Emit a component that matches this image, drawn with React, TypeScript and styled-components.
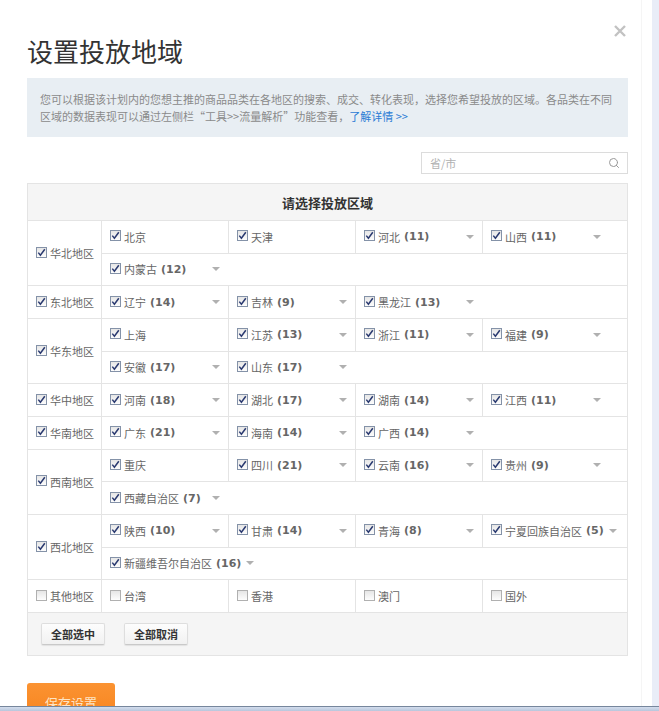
import React from 'react';
import styled, { createGlobalStyle } from 'styled-components';
import { Search } from 'lucide-react';

const CJK = `"Noto Sans CJK SC", "Noto Sans", sans-serif`;
const LINE = '#e4e4e4';

const GlobalStyle = createGlobalStyle`
  html, body {
    margin: 0;
    padding: 0;
    background: #fff;
  }
  body {
    font-family: ${CJK};
  }
`;

type Province = { name: string; count?: number; checked?: boolean };
type Region = { name: string; checked: boolean; rows: Province[][] };

const regions: Region[] = [
  {
    name: '华北地区',
    checked: true,
    rows: [
      [{ name: '北京' }, { name: '天津' }, { name: '河北', count: 11 }, { name: '山西', count: 11 }],
      [{ name: '内蒙古', count: 12 }],
    ],
  },
  {
    name: '东北地区',
    checked: true,
    rows: [[{ name: '辽宁', count: 14 }, { name: '吉林', count: 9 }, { name: '黑龙江', count: 13 }]],
  },
  {
    name: '华东地区',
    checked: true,
    rows: [
      [{ name: '上海' }, { name: '江苏', count: 13 }, { name: '浙江', count: 11 }, { name: '福建', count: 9 }],
      [{ name: '安徽', count: 17 }, { name: '山东', count: 17 }],
    ],
  },
  {
    name: '华中地区',
    checked: true,
    rows: [[{ name: '河南', count: 18 }, { name: '湖北', count: 17 }, { name: '湖南', count: 14 }, { name: '江西', count: 11 }]],
  },
  {
    name: '华南地区',
    checked: true,
    rows: [[{ name: '广东', count: 21 }, { name: '海南', count: 14 }, { name: '广西', count: 14 }]],
  },
  {
    name: '西南地区',
    checked: true,
    rows: [
      [{ name: '重庆' }, { name: '四川', count: 21 }, { name: '云南', count: 16 }, { name: '贵州', count: 9 }],
      [{ name: '西藏自治区', count: 7 }],
    ],
  },
  {
    name: '西北地区',
    checked: true,
    rows: [
      [{ name: '陕西', count: 10 }, { name: '甘肃', count: 14 }, { name: '青海', count: 8 }, { name: '宁夏回族自治区', count: 5 }],
      [{ name: '新疆维吾尔自治区', count: 16 }],
    ],
  },
  {
    name: '其他地区',
    checked: false,
    rows: [[
      { name: '台湾', checked: false },
      { name: '香港', checked: false },
      { name: '澳门', checked: false },
      { name: '国外', checked: false },
    ]],
  },
];

const Screen = styled.div`
  height: 711px;
  display: flex;
  flex-direction: column;
  overflow: hidden;
`;

const Workspace = styled.div`
  flex: 1;
  min-height: 0;
  display: flex;
  overflow: hidden;
`;

const Dialog = styled.div`
  position: relative;
  flex: 0 0 642px;
  box-sizing: border-box;
  padding: 36px 13px 0 27px;
  border-right: 1px solid #f5f5f5;
  background: #fff;
`;

const Gutter = styled.div`
  flex: 1;
  background: #fff;
`;

const SideStrip = styled.div`
  flex: 0 0 7px;
  background: #e9edf8;
`;

const Taskbar = styled.div`
  height: 4px;
  border-top: 1px solid #76869c;
  background: linear-gradient(#d3dded, #b8c7dc);
`;

const Close = styled.button`
  position: absolute;
  top: 25px;
  right: 15px;
  width: 12px;
  height: 12px;
  padding: 0;
  border: none;
  background: none;
  display: flex;
`;

const Title = styled.h1`
  margin: 0 0 12px;
  font: 400 26px/30px ${CJK};
  color: #333;
`;

const Notice = styled.p`
  margin: 0;
  padding: 13px;
  background: #e8eef3;
  color: #8a8a8a;
  font: 11px/16.5px ${CJK};
  white-space: nowrap;
`;

const MoreLink = styled.a`
  color: #2a7bd5;
  text-decoration: none;
`;

const SearchRow = styled.div`
  display: flex;
  justify-content: flex-end;
  margin-top: 15px;
`;

const SearchBox = styled.label`
  width: 207px;
  height: 22px;
  box-sizing: border-box;
  border: 1px solid #dcdcdc;
  display: flex;
  align-items: center;
  padding: 0 7px 0 8px;
  color: #999;
`;

const SearchInput = styled.input`
  flex: 1;
  min-width: 0;
  border: none;
  outline: none;
  padding: 0;
  background: transparent;
  font: 11px ${CJK};
  color: #666;
  &::placeholder {
    color: #b0b0b0;
  }
`;

const Table = styled.div`
  margin-top: 9px;
  border: 1px solid ${LINE};
`;

const TableHead = styled.div`
  height: 36px;
  display: flex;
  align-items: center;
  justify-content: center;
  background: #f5f5f5;
  border-bottom: 1px solid ${LINE};
  font: 700 13px ${CJK};
  color: #333;
`;

const RegionGroup = styled.div`
  display: flex;
  border-bottom: 1px solid ${LINE};
`;

const RegionCell = styled.div`
  flex: 0 0 74px;
  box-sizing: border-box;
  display: flex;
  align-items: center;
  padding-left: 8px;
  border-right: 1px solid ${LINE};
`;

const SubRows = styled.div`
  flex: 1;
  display: flex;
  flex-direction: column;
`;

const SubRow = styled.div`
  height: 31.67px;
  display: flex;
  border-bottom: 1px solid ${LINE};
  &:last-child {
    border-bottom: none;
  }
`;

const Item = styled.div`
  flex: 0 0 auto;
  min-width: 127px;
  box-sizing: border-box;
  display: flex;
  align-items: center;
  padding: 0 8px;
  border-right: 1px solid ${LINE};
  &:last-child {
    border-right-color: transparent;
  }
`;

const Box = styled.span<{ $on: boolean }>`
  flex: 0 0 auto;
  width: 11px;
  height: 11px;
  box-sizing: border-box;
  margin-right: 3px;
  margin-top: -2px;
  border: 1px solid ${(p) => (p.$on ? '#8492a8' : '#b0b0b0')};
  background: linear-gradient(#e6e6e6, #fdfdfd);
  display: flex;
  align-items: center;
  justify-content: center;
`;

const Name = styled.span`
  font: 11px ${CJK};
  color: #666;
  white-space: nowrap;
`;

const Count = styled.span`
  margin-left: 4px;
  margin-right: 5px;
  font: 700 11px "DejaVu Sans", Verdana, sans-serif;
  color: #666;
  white-space: nowrap;
`;

const Caret = styled.span`
  flex: 0 0 auto;
  margin-left: auto;
  width: 0;
  height: 0;
  border-left: 4px solid transparent;
  border-right: 4px solid transparent;
  border-top: 4px solid #b0b0b0;
`;

const ButtonBar = styled.div`
  height: 42px;
  box-sizing: border-box;
  display: flex;
  align-items: flex-start;
  gap: 19px;
  padding: 10px 0 0 13px;
  background: #f5f5f5;
`;

const BarButton = styled.button`
  height: 22px;
  padding: 0 9px;
  font: 700 11px ${CJK};
  color: #333;
  background: linear-gradient(#fdfdfd, #f1f1f1);
  border: 1px solid #dedede;
  border-bottom-color: #c9c9c9;
  border-radius: 2px;
  box-shadow: 0 1px 1px rgba(0, 0, 0, 0.08);
`;

const SaveButton = styled.button`
  margin-top: 27px;
  width: 88px;
  height: 40px;
  border: none;
  border-radius: 3px;
  background: linear-gradient(#fb9332, #f7821c);
  color: #fde4c4;
  font: 13px ${CJK};
`;

function Check({ on }: { on: boolean }) {
  return (
    <Box $on={on}>
      {on && (
        <svg width="9" height="9" viewBox="0 0 9 9">
          <path d="M1.3 4.6 L3.4 7.2 L7.8 1.2" fill="none" stroke="#2a3a70" strokeWidth="1.5" />
        </svg>
      )}
    </Box>
  );
}

function ProvinceItem({ p }: { p: Province }) {
  return (
    <Item>
      <Check on={p.checked !== false} />
      <Name>{p.name}</Name>
      {p.count !== undefined && (
        <>
          <Count>({p.count})</Count>
          <Caret />
        </>
      )}
    </Item>
  );
}

export default function App() {
  return (
    <Screen>
      <GlobalStyle />
      <Workspace>
        <Dialog>
          <Close aria-label="关闭">
            <svg width="12" height="12" viewBox="0 0 12 12">
              <path d="M1 1 L11 11 M11 1 L1 11" stroke="#c2c2c2" strokeWidth="2.4" />
            </svg>
          </Close>
          <Title>设置投放地域</Title>
          <Notice>
            您可以根据该计划内的您想主推的商品品类在各地区的搜索、成交、转化表现，选择您希望投放的区域。各品类在不同
            <br />
            区域的数据表现可以通过左侧栏“工具&gt;&gt;流量解析”功能查看，<MoreLink href="#">了解详情 &gt;&gt;</MoreLink>
          </Notice>
          <SearchRow>
            <SearchBox>
              <SearchInput placeholder="省/市" />
              <Search size={12} strokeWidth={2} />
            </SearchBox>
          </SearchRow>
          <Table>
            <TableHead>请选择投放区域</TableHead>
            {regions.map((r) => (
              <RegionGroup key={r.name}>
                <RegionCell>
                  <Check on={r.checked} />
                  <Name>{r.name}</Name>
                </RegionCell>
                <SubRows>
                  {r.rows.map((row, i) => (
                    <SubRow key={i}>
                      {row.map((p) => (
                        <ProvinceItem key={p.name} p={p} />
                      ))}
                    </SubRow>
                  ))}
                </SubRows>
              </RegionGroup>
            ))}
            <ButtonBar>
              <BarButton>全部选中</BarButton>
              <BarButton>全部取消</BarButton>
            </ButtonBar>
          </Table>
          <SaveButton>保存设置</SaveButton>
        </Dialog>
        <Gutter />
        <SideStrip />
      </Workspace>
      <Taskbar />
    </Screen>
  );
}
